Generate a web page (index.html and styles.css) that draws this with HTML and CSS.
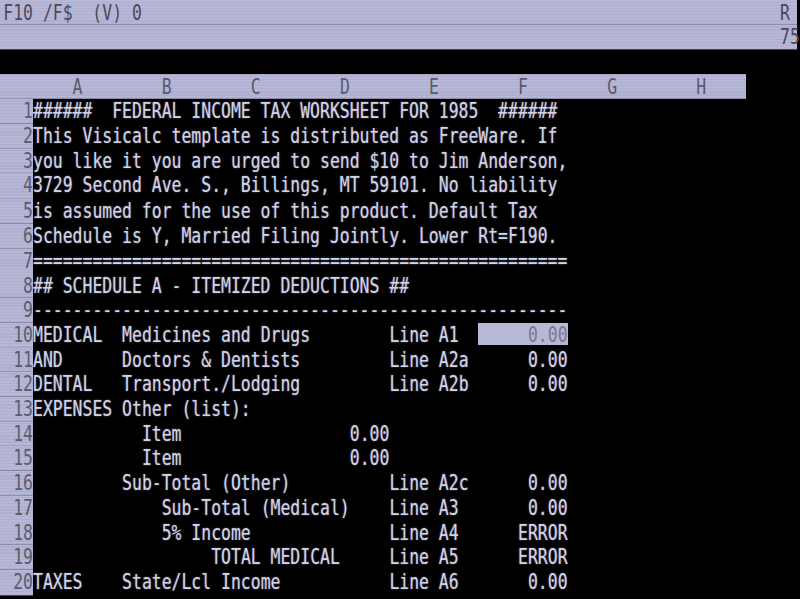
FILE: index.html
```html
<!DOCTYPE html>
<html>
<head>
<meta charset="utf-8">
<title>VisiCalc</title>
<link rel="stylesheet" href="styles.css">
</head>
<body>
<div class="frame">
<div class="screen">
  <div class="ln top"><span class="status">F10 /F$  (V) 0</span><span class="ind">R</span></div>
  <div class="ln top"><span class="status"></span><span class="ind">75</span></div>
  <div class="ln"></div>
  <div class="ln grid cols"><span></span><span>A</span><span>B</span><span>C</span><span>D</span><span>E</span><span>F</span><span>G</span><span>H</span></div>

  <div class="ln grid"><span class="rn">1</span><span class="c">######  FEDERAL INCOME TAX WORKSHEET FOR 1985  ######</span></div>
  <div class="ln grid"><span class="rn">2</span><span class="c">This Visicalc template is distributed as FreeWare. If</span></div>
  <div class="ln grid"><span class="rn">3</span><span class="c">you like it you are urged to send $10 to Jim Anderson,</span></div>
  <div class="ln grid"><span class="rn">4</span><span class="c">3729 Second Ave. S., Billings, MT 59101. No liability</span></div>
  <div class="ln grid"><span class="rn">5</span><span class="c">is assumed for the use of this product. Default Tax</span></div>
  <div class="ln grid"><span class="rn">6</span><span class="c">Schedule is Y, Married Filing Jointly. Lower Rt=F190.</span></div>
  <div class="ln grid"><span class="rn">7</span><span class="c">======================================================</span></div>
  <div class="ln grid"><span class="rn">8</span><span class="c">## SCHEDULE A - ITEMIZED DEDUCTIONS ##</span></div>
  <div class="ln grid"><span class="rn">9</span><span class="c">------------------------------------------------------</span></div>
  <div class="ln grid"><span class="rn">10</span><span class="c">MEDICAL</span><span class="c">Medicines and Drugs</span><span class="c"></span><span class="c"></span><span class="c">Line A1</span><span class="c num hl">0.00</span></div>
  <div class="ln grid"><span class="rn">11</span><span class="c">AND</span><span class="c">Doctors &amp; Dentists</span><span class="c"></span><span class="c"></span><span class="c">Line A2a</span><span class="c num">0.00</span></div>
  <div class="ln grid"><span class="rn">12</span><span class="c">DENTAL</span><span class="c">Transport./Lodging</span><span class="c"></span><span class="c"></span><span class="c">Line A2b</span><span class="c num">0.00</span></div>
  <div class="ln grid"><span class="rn">13</span><span class="c">EXPENSES</span><span class="c">Other (list):</span></div>
  <div class="ln grid"><span class="rn">14</span><span class="c"></span><span class="c">  Item</span><span class="c"></span><span class="c num">0.00</span></div>
  <div class="ln grid"><span class="rn">15</span><span class="c"></span><span class="c">  Item</span><span class="c"></span><span class="c num">0.00</span></div>
  <div class="ln grid"><span class="rn">16</span><span class="c"></span><span class="c">Sub-Total (Other)</span><span class="c"></span><span class="c"></span><span class="c">Line A2c</span><span class="c num">0.00</span></div>
  <div class="ln grid"><span class="rn">17</span><span class="c"></span><span class="c">    Sub-Total (Medical)</span><span class="c"></span><span class="c"></span><span class="c">Line A3</span><span class="c num">0.00</span></div>
  <div class="ln grid"><span class="rn">18</span><span class="c"></span><span class="c">    5% Income</span><span class="c"></span><span class="c"></span><span class="c">Line A4</span><span class="c num">ERROR</span></div>
  <div class="ln grid"><span class="rn">19</span><span class="c"></span><span class="c"></span><span class="c">TOTAL MEDICAL</span><span class="c"></span><span class="c">Line A5</span><span class="c num">ERROR</span></div>
  <div class="ln grid"><span class="rn">20</span><span class="c">TAXES</span><span class="c">State/Lcl Income</span><span class="c"></span><span class="c"></span><span class="c">Line A6</span><span class="c num">0.00</span></div>
</div>
</div>
</body>
</html>
```

FILE: styles.css
```css
html, body {
  margin: 0;
  padding: 0;
  background: #000;
}

.frame {
  width: 800px;
  height: 599px;
  overflow: hidden;
}

.screen {
  width: 800px;
  height: 461px;
  transform: scaleY(1.3);
  transform-origin: 0 0;
  font-family: "DejaVu Sans Mono", "Liberation Mono", monospace;
  font-size: 16.44px;
  color: #d2d2ea;
  text-shadow: 0 0 1.5px rgba(210, 210, 240, 0.55);
}

.ln {
  height: 19.077px;
  line-height: 19.077px;
  white-space: pre;
  display: flex;
}

.top .status,
.top .ind,
.cols,
.rn,
.hl {
  background-color: #b7b7d7;
  background-image: repeating-linear-gradient(0deg, rgba(60, 60, 90, 0.07) 0 1px, transparent 1px 2.4px);
  color: #4a4a58;
  text-shadow: none;
}

.top .status {
  width: 780px;
  padding-left: 3.3px;
  box-sizing: border-box;
}

.top .ind {
  width: 17px;
}

.grid {
  display: grid;
  grid-template-columns: 33px repeat(8, 89.1px);
}

.cols {
  width: 745.8px;
}

.cols span {
  text-align: center;
  color: #5a5a6a;
}

.rn {
  text-align: right;
  color: #5c5c6c;
}

.c {
  overflow: visible;
  white-space: pre;
}

.num {
  text-align: right;
}

.hl {
  background: linear-gradient(to bottom, transparent 0.5px, #b7b7d7 0.5px, #b7b7d7 17.4px, transparent 17.4px);
  color: #7a7a8c;
}
```
